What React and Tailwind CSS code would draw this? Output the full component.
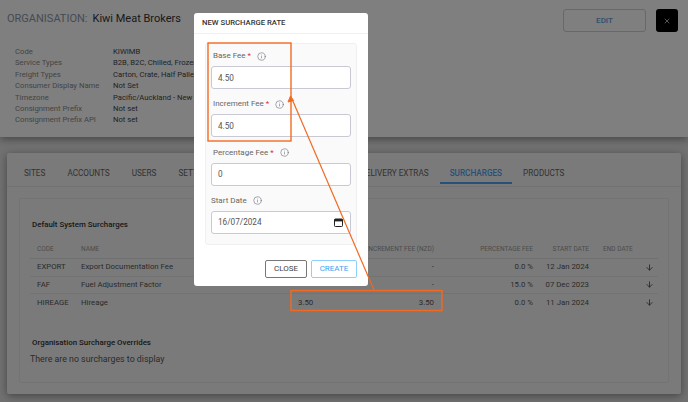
import React from "react";
import { ArrowDown, Info, X } from "lucide-react";

const details = [
  ["Code", "KIWIMB"],
  ["Service Types", "B2B, B2C, Chilled, Frozen"],
  ["Freight Types", "Carton, Crate, Half Pallet"],
  ["Consumer Display Name", "Not Set"],
  ["Timezone", "Pacific/Auckland - New Zealand"],
  ["Consignment Prefix", "Not set"],
  ["Consignment Prefix API", "Not set"],
];

const rows = [
  ["EXPORT", "Export Documentation Fee", "", "-", "0.0 %", "12 Jan 2024"],
  ["FAF", "Fuel Adjustment Factor", "", "-", "15.0 %", "07 Dec 2023"],
  ["HIREAGE", "Hireage", "3.50", "3.50", "0.0 %", "11 Jan 2024"],
];

const rowGrid = "grid grid-cols-[44px_217px_50px_86px_99px_56px_14px_1fr] pl-[7px] pr-[4px] items-center whitespace-nowrap";

const CalendarGlyph = () => (
  <svg className="absolute right-[8px] top-[7px]" width="9" height="9" viewBox="0 0 9 9" fill="none">
    <rect x="0.5" y="1" width="8" height="7.5" rx="0.8" stroke="#222" />
    <rect x="0.5" y="1" width="8" height="2.4" fill="#222" />
  </svg>
);

const Field = ({ label, required, value, inset, iconGap, calendar }) => (
  <div className="flex flex-col">
    <div className={`flex h-[22px] items-center pt-[2px] text-[8px] text-[#666] ${inset}`}>
      {label}
      {required && <span className="ml-[2px] text-[#d33]">*</span>}
      <Info size={9} strokeWidth={1.5} className={`text-[#667] ${iconGap}`} />
    </div>
    <div className="relative">
      <input
        type="text"
        defaultValue={value}
        className="block h-[23px] w-full rounded-[3px] border border-[#c9c9d6] bg-white px-[6px] text-[8.2px] text-[#555] outline-none"
      />
      {calendar && <CalendarGlyph />}
    </div>
  </div>
);

export default function App() {
  return (
    <div className="relative h-[402px] w-[688px] overflow-hidden bg-[#e2e2e2] font-['Roboto',sans-serif]">
      {/* Organisation header */}
      <header className="relative h-[137px] bg-white px-[7px] pt-[9px] shadow-[0_2px_8px_rgba(0,0,0,0.4)]">
        <div className="flex items-start justify-between">
          <h1 className="pt-[2px] text-[11px] leading-[15px]">
            <span className="text-[#8a96a8]">ORGANISATION:</span>
            <span className="ml-[5px] text-[#333]">Kiwi Meat Brokers</span>
          </h1>
          <div className="flex items-center gap-[10px] pr-[3px]">
            <button className="h-[23px] w-[83px] rounded-[3px] border border-[#a8dcff] text-[8px] font-medium text-[#5ea0d8]">
              EDIT
            </button>
            <button className="flex h-[23px] w-[22px] items-center justify-center rounded-[3px] bg-black text-white">
              <X size={8} />
            </button>
          </div>
        </div>
        <dl className="mt-[14px] pl-[8px] text-[7.7px] leading-[11.4px]">
          {details.map(([name, value]) => (
            <div key={name} className="flex">
              <dt className="w-[98px] text-[#888]">{name}</dt>
              <dd className="text-[#444]">{value}</dd>
            </div>
          ))}
        </dl>
      </header>

      {/* Tabs card */}
      <main className="px-[7px] pt-[16px]">
        <section className="h-[241px] w-[674px] rounded-[2px] bg-[#f5f5f5] shadow-[0_2px_8px_rgba(0,0,0,0.4)]">
          <nav className="flex h-[34px] border-b border-[#e4e4e4] pl-[6px] text-[8.2px] text-[#666]">
            <span className="px-[11px] pt-[14px]">SITES</span>
            <span className="px-[11px] pt-[14px]">ACCOUNTS</span>
            <span className="px-[11px] pt-[14px]">USERS</span>
            <span className="px-[11px] pt-[14px]">SETTINGS</span>
            <span className="ml-[122px] px-[11px] pt-[14px]">DELIVERY EXTRAS</span>
            <span className="h-[31px] border-b-2 border-[#52a0f0] px-[10px] pt-[14px] font-medium text-[#52a0f0]">
              SURCHARGES
            </span>
            <span className="px-[11px] pt-[14px]">PRODUCTS</span>
          </nav>

          <div className="ml-[12px] mt-[11px] h-[185px] w-[650px] rounded-[2px] border border-[#e8e8e8] px-[10px] pt-[20px]">
            <h2 className="pl-[2px] text-[7.9px] font-medium leading-[11px] text-[#333]">Default System Surcharges</h2>

            <div className="mt-[11px] w-[628px] text-[7.8px] text-[#555]">
              <div className={`${rowGrid} h-[18px] border-b border-[#e0e0e0] text-[6.5px] text-[#999]`}>
                <span>CODE</span>
                <span>NAME</span>
                <span>BASE FEE (NZD)</span>
                <span className="text-right">INCREMENT FEE (NZD)</span>
                <span className="text-right">PERCENTAGE FEE</span>
                <span className="text-right">START DATE</span>
                <span />
                <span>END DATE</span>
              </div>
              {rows.map(([code, name, base, increment, percent, start]) => (
                <div key={code} className={`${rowGrid} h-[17.5px] border-b border-[#e6e6e6] last:border-b-0`}>
                  <span>{code}</span>
                  <span>{name}</span>
                  <span>{base}</span>
                  <span className="text-right">{increment}</span>
                  <span className="text-right">{percent}</span>
                  <span className="text-right">{start}</span>
                  <span />
                  <span className="flex justify-end">
                    <ArrowDown size={9} strokeWidth={2} className="text-[#333]" />
                  </span>
                </div>
              ))}
            </div>

            <h2 className="mt-[25px] pl-[2px] text-[7.9px] font-medium leading-[11px] text-[#333]">
              Organisation Surcharge Overrides
            </h2>
            <p className="mt-[5px] text-[8.8px] leading-[13px] text-[#555]">There are no surcharges to display</p>
          </div>
        </section>
      </main>

      {/* Dim layer behind the dialog */}
      <div className="absolute inset-0 bg-black/50" />

      {/* New surcharge rate dialog */}
      <div className="absolute left-[194px] top-[13px] h-[273px] w-[174px] rounded-[3px] bg-white">
        <div className="flex h-[21px] items-center border-b border-[#f0f0f0] px-[8px] text-[7.7px] font-medium text-[#333]">
          NEW SURCHARGE RATE
        </div>
        <div className="ml-[11px] mt-[9px] flex h-[202px] w-[152px] flex-col gap-[3.3px] rounded-[3px] border border-[#f0f0f0] bg-[#fafafa] px-[5px]">
          <Field label="Base Fee" required value="4.50" inset="pl-[2px]" iconGap="ml-[6px]" />
          <Field label="Increment Fee" required value="4.50" inset="pl-[2px]" iconGap="ml-[6px]" />
          <Field label="Percentage Fee" required value="0" inset="pl-[2px]" iconGap="ml-[6px]" />
          <Field label="Start Date" value="16/07/2024" iconGap="ml-[6px]" calendar />
        </div>
        <div className="mt-[15px] flex justify-end gap-[4px] pr-[11px]">
          <button className="h-[18px] w-[42px] rounded-[2px] border border-[#777] text-[8px] text-[#444]">CLOSE</button>
          <button className="h-[18px] w-[46px] rounded-[2px] border border-[#8fd0fb] text-[8px] text-[#35a4f4]">CREATE</button>
        </div>
      </div>

      {/* Orange annotations */}
      <svg className="absolute inset-0" width="688" height="402" viewBox="0 0 688 402" fill="none">
        <rect x="208" y="43" width="83" height="98" stroke="#f26a21" strokeWidth="1.4" />
        <rect x="291" y="290.5" width="151" height="20" stroke="#f26a21" strokeWidth="1.4" />
        <path d="M374 290 L292 99" stroke="#f26a21" strokeWidth="1.2" />
        <path d="M290.5 96 L288 102 L293.5 100.5 Z" fill="#f26a21" stroke="#f26a21" strokeWidth="1" />
      </svg>
    </div>
  );
}
